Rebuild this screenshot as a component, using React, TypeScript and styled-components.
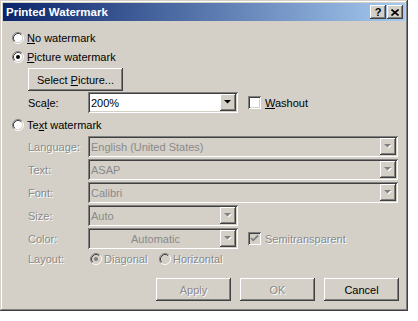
import React from "react"
import styled, { createGlobalStyle, css } from "styled-components"

const GlobalStyle = createGlobalStyle`
  html, body {
    margin: 0;
    padding: 0;
    background: #ffffff;
  }
  body {
    font-family: "Liberation Sans", Arial, sans-serif;
    font-size: 11px;
    color: #000;
  }
`

const raised = css`
  box-shadow: inset -1px -1px #404040, inset 1px 1px #ffffff,
    inset -2px -2px #808080, inset 2px 2px #d4d0c8;
`

const sunken = css`
  box-shadow: inset 1px 1px #808080, inset -1px -1px #ffffff,
    inset 2px 2px #404040, inset -2px -2px #d4d0c8;
`

const Window = styled.div`
  box-sizing: border-box;
  width: 408px;
  height: 311px;
  padding: 3px;
  background: #d4d0c8;
  box-shadow: inset -1px -1px #404040, inset 1px 1px #d4d0c8,
    inset -2px -2px #808080, inset 2px 2px #ffffff;
  display: flex;
  flex-direction: column;
`

const TitleBar = styled.div`
  height: 18px;
  display: flex;
  align-items: center;
  padding: 0 2px 0 3px;
  background: linear-gradient(to right, #0a246a, #a6caf0);
`

const Title = styled.div`
  flex: 1;
  color: #ffffff;
  font-weight: bold;
  font-size: 11.5px;
`

const TitleButton = styled.div<{ $gap?: boolean }>`
  box-sizing: border-box;
  width: 16px;
  height: 14px;
  margin-left: ${(p) => (p.$gap ? "1px" : "0")};
  background: #d4d0c8;
  ${raised};
  display: flex;
  align-items: center;
  justify-content: center;
  font-weight: bold;
  font-size: 11px;
  line-height: 1;
`

const Body = styled.div`
  flex: 1;
  display: flex;
  flex-direction: column;
  padding: 9px 6px 0 9px;
`

const OptionRow = styled.div<{ $top: number }>`
  height: 16px;
  margin-top: ${(p) => p.$top}px;
  display: flex;
  align-items: center;
  gap: 3px;
`

const Indent = styled.div`
  margin-left: 16px;
  display: flex;
  flex-direction: column;
`

const FieldRow = styled.div<{ $top: number; $height?: number }>`
  height: ${(p) => p.$height ?? 21}px;
  margin-top: ${(p) => p.$top}px;
  display: flex;
  align-items: center;
`

const Label = styled.span<{ $disabled?: boolean }>`
  width: 60px;
  flex: none;
  color: ${(p) => (p.$disabled ? "#8a8a8a" : "#000")};
  text-shadow: ${(p) => (p.$disabled ? "1px 1px 0 #ffffff" : "none")};
`

const Text = styled.span<{ $disabled?: boolean }>`
  color: ${(p) => (p.$disabled ? "#8a8a8a" : "#000")};
  text-shadow: ${(p) => (p.$disabled ? "1px 1px 0 #ffffff" : "none")};
  white-space: nowrap;
`

const PushButton = styled.button<{ $width: number; $disabled?: boolean }>`
  box-sizing: border-box;
  width: ${(p) => p.$width}px;
  height: 23px;
  padding: 0;
  border: none;
  background: #d4d0c8;
  ${raised};
  font-family: inherit;
  font-size: 11px;
  color: ${(p) => (p.$disabled ? "#8a8a8a" : "#000")};
  text-shadow: ${(p) => (p.$disabled ? "1px 1px 0 #ffffff" : "none")};
`

const ComboBox = styled.div<{ $width: number; $disabled?: boolean }>`
  box-sizing: border-box;
  width: ${(p) => p.$width}px;
  height: 21px;
  padding: 2px;
  background: ${(p) => (p.$disabled ? "#d4d0c8" : "#ffffff")};
  ${sunken};
  display: flex;
  align-items: stretch;
`

const ComboValue = styled.div<{ $disabled?: boolean; $center?: boolean }>`
  flex: 1;
  display: flex;
  align-items: center;
  justify-content: ${(p) => (p.$center ? "center" : "flex-start")};
  padding-left: 1px;
  color: ${(p) => (p.$disabled ? "#8a8a8a" : "#000")};
  white-space: nowrap;
  overflow: hidden;
`

const DropButton = styled.div`
  box-sizing: border-box;
  width: 16px;
  flex: none;
  background: #d4d0c8;
  ${raised};
  display: flex;
  align-items: center;
  justify-content: center;
`

const CheckBox = styled.div<{ $disabled?: boolean }>`
  box-sizing: border-box;
  width: 13px;
  height: 13px;
  flex: none;
  background: ${(p) => (p.$disabled ? "#d4d0c8" : "#ffffff")};
  ${sunken};
  display: flex;
  align-items: center;
  justify-content: center;
`

const CheckGroup = styled.div`
  margin-left: 10px;
  display: flex;
  align-items: center;
  gap: 4px;
`

const LayoutChoices = styled.div`
  display: flex;
  align-items: center;
  margin-left: 2px;
`

const Choice = styled.div<{ $width?: number }>`
  width: ${(p) => (p.$width ? `${p.$width}px` : "auto")};
  display: flex;
  align-items: center;
  gap: 2px;
`

const Footer = styled.div`
  margin-top: 11px;
  display: flex;
  justify-content: flex-end;
  gap: 9px;
`

function Radio({ checked, disabled }: { checked?: boolean; disabled?: boolean }) {
  return (
    <svg width="12" height="12" viewBox="0 0 12 12" style={{ flex: "none" }}>
      <circle cx="6" cy="6" r="4.5" fill={disabled ? "#d4d0c8" : "#ffffff"} />
      <path d="M2.11 9.89 A5.5 5.5 0 0 1 9.89 2.11" stroke="#808080" fill="none" />
      <path d="M9.89 2.11 A5.5 5.5 0 0 1 2.11 9.89" stroke="#ffffff" fill="none" />
      <path d="M2.82 9.18 A4.5 4.5 0 0 1 9.18 2.82" stroke="#404040" fill="none" />
      <path d="M9.18 2.82 A4.5 4.5 0 0 1 2.82 9.18" stroke="#d4d0c8" fill="none" />
      {checked && <circle cx="6" cy="6" r="2" fill={disabled ? "#808080" : "#000000"} />}
    </svg>
  )
}

function Check({ disabled }: { disabled?: boolean }) {
  return (
    <svg width="9" height="9" viewBox="0 0 9 9">
      <path d="M1 4 L3.2 6.3 L8 1.5" stroke={disabled ? "#808080" : "#000"} strokeWidth="1.8" fill="none" />
    </svg>
  )
}

function Arrow({ disabled }: { disabled?: boolean }) {
  return (
    <svg width="8" height="5" viewBox="0 0 8 5">
      {disabled && <path d="M1 1 H8 L4.5 4.5 Z" fill="#ffffff" />}
      <path d="M0 0 H7 L3.5 3.5 Z" fill={disabled ? "#808080" : "#000"} />
    </svg>
  )
}

function Combo({
  width,
  value,
  disabled,
  center,
}: {
  width: number
  value: string
  disabled?: boolean
  center?: boolean
}) {
  return (
    <ComboBox $width={width} $disabled={disabled}>
      <ComboValue $disabled={disabled} $center={center}>
        {value}
      </ComboValue>
      <DropButton>
        <Arrow disabled={disabled} />
      </DropButton>
    </ComboBox>
  )
}

export default function App() {
  return (
    <>
      <GlobalStyle />
      <Window>
        <TitleBar>
          <Title>Printed Watermark</Title>
          <TitleButton>?</TitleButton>
          <TitleButton $gap>
            <svg width="8" height="7" viewBox="0 0 8 7">
              <path d="M0.5 0.5 L7.5 6.5 M7.5 0.5 L0.5 6.5" stroke="#000" strokeWidth="1.6" />
            </svg>
          </TitleButton>
        </TitleBar>
        <Body>
          <OptionRow $top={0}>
            <Radio />
            <Text>
              <u>N</u>o watermark
            </Text>
          </OptionRow>
          <OptionRow $top={3}>
            <Radio checked />
            <Text>
              <u>P</u>icture watermark
            </Text>
          </OptionRow>
          <Indent>
            <FieldRow $top={3} $height={23}>
              <PushButton $width={95}>
                Select <u>P</u>icture...
              </PushButton>
            </FieldRow>
            <FieldRow $top={1}>
              <Label>
                Sca<u>l</u>e:
              </Label>
              <Combo width={150} value="200%" />
              <CheckGroup>
                <CheckBox />
                <Text>
                  <u>W</u>ashout
                </Text>
              </CheckGroup>
            </FieldRow>
          </Indent>
          <OptionRow $top={4}>
            <Radio />
            <Text>
              Te<u>x</u>t watermark
            </Text>
          </OptionRow>
          <Indent>
            <FieldRow $top={3}>
              <Label $disabled>Language:</Label>
              <Combo width={310} value="English (United States)" disabled />
            </FieldRow>
            <FieldRow $top={2}>
              <Label $disabled>Text:</Label>
              <Combo width={310} value="ASAP" disabled />
            </FieldRow>
            <FieldRow $top={2}>
              <Label $disabled>Font:</Label>
              <Combo width={310} value="Calibri" disabled />
            </FieldRow>
            <FieldRow $top={2}>
              <Label $disabled>Size:</Label>
              <Combo width={150} value="Auto" disabled />
            </FieldRow>
            <FieldRow $top={2}>
              <Label $disabled>Color:</Label>
              <Combo width={150} value="Automatic" disabled center />
              <CheckGroup>
                <CheckBox $disabled>
                  <Check disabled />
                </CheckBox>
                <Text $disabled>Semitransparent</Text>
              </CheckGroup>
            </FieldRow>
            <FieldRow $top={2} $height={16}>
              <Label $disabled>Layout:</Label>
              <LayoutChoices>
                <Choice $width={69}>
                  <Radio checked disabled />
                  <Text $disabled>Diagonal</Text>
                </Choice>
                <Choice>
                  <Radio disabled />
                  <Text $disabled>Horizontal</Text>
                </Choice>
              </LayoutChoices>
            </FieldRow>
          </Indent>
          <Footer>
            <PushButton $width={75} $disabled>
              Apply
            </PushButton>
            <PushButton $width={75} $disabled>
              OK
            </PushButton>
            <PushButton $width={75}>Cancel</PushButton>
          </Footer>
        </Body>
      </Window>
    </>
  )
}
